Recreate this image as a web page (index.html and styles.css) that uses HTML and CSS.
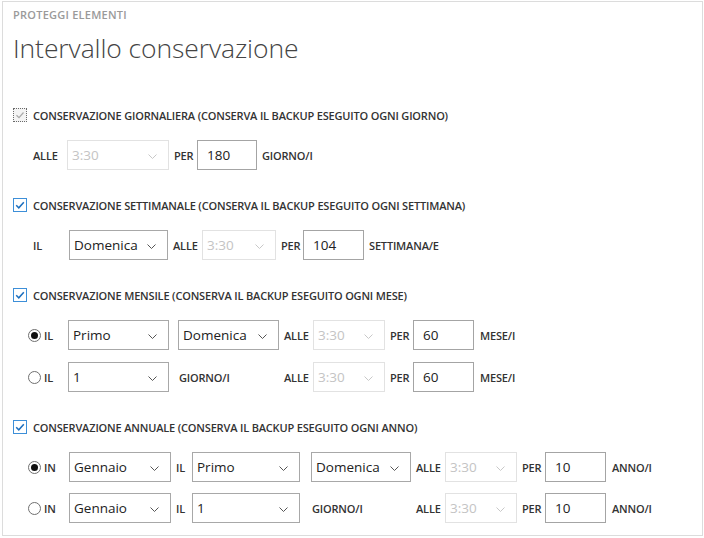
FILE: index.html
```html
<!DOCTYPE html>
<html lang="it">
<head>
<meta charset="utf-8">
<title>Intervallo conservazione</title>
<link rel="stylesheet" href="styles.css">
</head>
<body>
<div class="panel">
  <div class="eyebrow">PROTEGGI ELEMENTI</div>
  <h1 class="title">Intervallo conservazione</h1>

  <section class="sec">
    <div class="head"><span class="cb cb-off"><svg viewBox="0 0 14 14" width="14" height="14"><polyline points="3.5,7.2 6,9.6 10.5,4.5" fill="none" stroke="#a8a8a8" stroke-width="1.2"/></svg></span>CONSERVAZIONE GIORNALIERA (CONSERVA IL BACKUP ESEGUITO OGNI GIORNO)</div>
    <div class="row ind-33">
      <span class="lbl lead">ALLE</span>
      <span class="sel dis w102">3:30<svg class="chev" viewBox="0 0 9 5" width="9" height="5"><polyline points="0.5,0.5 4.5,4.5 8.5,0.5" fill="none" stroke="currentColor" stroke-width="1"/></svg></span>
      <span class="lbl per">PER</span>
      <span class="inp w60">180</span>
      <span class="lbl">GIORNO/I</span>
    </div>
  </section>

  <section class="sec">
    <div class="head"><span class="cb cb-on"><svg viewBox="0 0 14 14" width="14" height="14"><polyline points="3.2,7.2 5.8,9.8 10.8,4.2" fill="none" stroke="#1c6fbf" stroke-width="1.5"/></svg></span>CONSERVAZIONE SETTIMANALE (CONSERVA IL BACKUP ESEGUITO OGNI SETTIMANA)</div>
    <div class="row ind-33">
      <span class="lbl lead-il">IL</span>
      <span class="sel w99">Domenica<svg class="chev" viewBox="0 0 9 5" width="9" height="5"><polyline points="0.5,0.5 4.5,4.5 8.5,0.5" fill="none" stroke="currentColor" stroke-width="1"/></svg></span>
      <span class="lbl alle">ALLE</span>
      <span class="sel dis w74">3:30<svg class="chev" viewBox="0 0 9 5" width="9" height="5"><polyline points="0.5,0.5 4.5,4.5 8.5,0.5" fill="none" stroke="currentColor" stroke-width="1"/></svg></span>
      <span class="lbl per-s">PER</span>
      <span class="inp w61">104</span>
      <span class="lbl">SETTIMANA/E</span>
    </div>
  </section>

  <section class="sec">
    <div class="head"><span class="cb cb-on"><svg viewBox="0 0 14 14" width="14" height="14"><polyline points="3.2,7.2 5.8,9.8 10.8,4.2" fill="none" stroke="#1c6fbf" stroke-width="1.5"/></svg></span>CONSERVAZIONE MENSILE (CONSERVA IL BACKUP ESEGUITO OGNI MESE)</div>
    <div class="rows">
      <div class="row ind-28">
        <span class="radio on"></span>
        <span class="lbl rlbl">IL</span>
        <span class="sel w101">Primo<svg class="chev" viewBox="0 0 9 5" width="9" height="5"><polyline points="0.5,0.5 4.5,4.5 8.5,0.5" fill="none" stroke="currentColor" stroke-width="1"/></svg></span>
        <span class="sel w101 push4">Domenica<svg class="chev" viewBox="0 0 9 5" width="9" height="5"><polyline points="0.5,0.5 4.5,4.5 8.5,0.5" fill="none" stroke="currentColor" stroke-width="1"/></svg></span>
        <span class="lbl alle">ALLE</span>
        <span class="sel dis w72">3:30<svg class="chev" viewBox="0 0 9 5" width="9" height="5"><polyline points="0.5,0.5 4.5,4.5 8.5,0.5" fill="none" stroke="currentColor" stroke-width="1"/></svg></span>
        <span class="lbl per">PER</span>
        <span class="inp w61">60</span>
        <span class="lbl unit">MESE/I</span>
      </div>
      <div class="row ind-28">
        <span class="radio"></span>
        <span class="lbl rlbl">IL</span>
        <span class="sel w101">1<svg class="chev" viewBox="0 0 9 5" width="9" height="5"><polyline points="0.5,0.5 4.5,4.5 8.5,0.5" fill="none" stroke="currentColor" stroke-width="1"/></svg></span>
        <span class="lbl slot w101 push4">GIORNO/I</span>
        <span class="lbl alle">ALLE</span>
        <span class="sel dis w72">3:30<svg class="chev" viewBox="0 0 9 5" width="9" height="5"><polyline points="0.5,0.5 4.5,4.5 8.5,0.5" fill="none" stroke="currentColor" stroke-width="1"/></svg></span>
        <span class="lbl per">PER</span>
        <span class="inp w61">60</span>
        <span class="lbl unit">MESE/I</span>
      </div>
    </div>
  </section>

  <section class="sec">
    <div class="head"><span class="cb cb-on"><svg viewBox="0 0 14 14" width="14" height="14"><polyline points="3.2,7.2 5.8,9.8 10.8,4.2" fill="none" stroke="#1c6fbf" stroke-width="1.5"/></svg></span>CONSERVAZIONE ANNUALE (CONSERVA IL BACKUP ESEGUITO OGNI ANNO)</div>
    <div class="rows rows-tight">
      <div class="row ind-28">
        <span class="radio on"></span>
        <span class="lbl rlbl-in">IN</span>
        <span class="sel w102">Gennaio<svg class="chev" viewBox="0 0 9 5" width="9" height="5"><polyline points="0.5,0.5 4.5,4.5 8.5,0.5" fill="none" stroke="currentColor" stroke-width="1"/></svg></span>
        <span class="lbl il-mid">IL</span>
        <span class="sel w108">Primo<svg class="chev" viewBox="0 0 9 5" width="9" height="5"><polyline points="0.5,0.5 4.5,4.5 8.5,0.5" fill="none" stroke="currentColor" stroke-width="1"/></svg></span>
        <span class="sel w100 push6">Domenica<svg class="chev" viewBox="0 0 9 5" width="9" height="5"><polyline points="0.5,0.5 4.5,4.5 8.5,0.5" fill="none" stroke="currentColor" stroke-width="1"/></svg></span>
        <span class="lbl alle">ALLE</span>
        <span class="sel dis w72">3:30<svg class="chev" viewBox="0 0 9 5" width="9" height="5"><polyline points="0.5,0.5 4.5,4.5 8.5,0.5" fill="none" stroke="currentColor" stroke-width="1"/></svg></span>
        <span class="lbl per">PER</span>
        <span class="inp w61">10</span>
        <span class="lbl unit">ANNO/I</span>
      </div>
      <div class="row ind-28">
        <span class="radio"></span>
        <span class="lbl rlbl-in">IN</span>
        <span class="sel w102">Gennaio<svg class="chev" viewBox="0 0 9 5" width="9" height="5"><polyline points="0.5,0.5 4.5,4.5 8.5,0.5" fill="none" stroke="currentColor" stroke-width="1"/></svg></span>
        <span class="lbl il-mid">IL</span>
        <span class="sel w108">1<svg class="chev" viewBox="0 0 9 5" width="9" height="5"><polyline points="0.5,0.5 4.5,4.5 8.5,0.5" fill="none" stroke="currentColor" stroke-width="1"/></svg></span>
        <span class="lbl slot w100 push6">GIORNO/I</span>
        <span class="lbl alle">ALLE</span>
        <span class="sel dis w72">3:30<svg class="chev" viewBox="0 0 9 5" width="9" height="5"><polyline points="0.5,0.5 4.5,4.5 8.5,0.5" fill="none" stroke="currentColor" stroke-width="1"/></svg></span>
        <span class="lbl per">PER</span>
        <span class="inp w61">10</span>
        <span class="lbl unit">ANNO/I</span>
      </div>
    </div>
  </section>
</div>
</body>
</html>
```

FILE: styles.css
```css
* { box-sizing: border-box; }
html, body { margin: 0; padding: 0; background: #fff; }
body {
  font-family: "Open Sans", "Noto Sans", "Liberation Sans", sans-serif;
  color: #333;
}
.panel {
  margin: 1px 0 0 2px;
  width: 701px;
  height: 535px;
  border: 1px solid #dcdcdc;
  padding: 5px 0 0 10px;
}
.eyebrow {
  font-size: 11px;
  font-weight: 600;
  color: #9a9a9a;
  line-height: 16px;
  letter-spacing: 0.25px;
}
.title {
  margin: 8px 0 0 0;
  font-size: 26.5px;
  font-weight: 300;
  line-height: 34px;
  color: #444;
  letter-spacing: -0.1px;
}
.sec { margin-top: 25px; }
.title + .sec { margin-top: 40px; }
.head {
  display: flex;
  align-items: center;
  height: 20px;
  font-size: 11px;
  font-weight: 600;
  color: #333;
  letter-spacing: -0.17px;
  margin-bottom: 15px;
}
.cb {
  width: 14px;
  height: 14px;
  margin-right: 6px;
  display: inline-flex;
  flex: none;
}
.cb svg { display: block; }
.cb-on { border: 1px solid #3d8fd8; }
.cb-on svg { margin: -1px; }
.cb-off { border: 1px dotted #6a6a6a; background: #f4f4f4; }
.cb-off svg { margin: -1px; }

.rows { display: flex; flex-direction: column; gap: 12px; }
.rows-tight { gap: 11px; }
.row {
  display: flex;
  align-items: center;
  height: 30px;
  gap: 5px;
}
.ind-33 { padding-left: 20px; }
.ind-28 { padding-left: 15px; }

.lbl {
  font-size: 11px;
  font-weight: 600;
  color: #333;
  letter-spacing: -0.17px;
  white-space: nowrap;
  flex: none;
}
.lead { width: 29px; }
.lead-il { width: 31px; }
.alle { width: 24px; }
.per { width: 18px; }
.per-s { width: 17px; }
.rlbl { width: 19px; margin-left: -2px; }
.rlbl-in { width: 20px; margin-left: -2px; }
.il-mid { width: 11px; }
.slot { padding-left: 1px; }
.unit { margin-left: 1px; }
.push4 { margin-left: 4px; }
.push6 { margin-left: 6px; }

.radio {
  width: 13px;
  height: 13px;
  border: 1px solid #6f6f6f;
  border-radius: 50%;
  flex: none;
  display: flex;
  align-items: center;
  justify-content: center;
}
.radio.on::after {
  content: "";
  width: 7px;
  height: 7px;
  border-radius: 50%;
  background: #111;
}

.sel, .inp {
  height: 30px;
  display: flex;
  align-items: center;
  font-size: 13.5px;
  color: #222;
  background: #fff;
  flex: none;
  position: relative;
  white-space: nowrap;
}
.sel {
  border: 1px solid #a8a8a8;
  padding-left: 4px;
}
.sel .chev {
  position: absolute;
  right: 11px;
  top: 13px;
  color: #555;
}
.sel.dis { border-color: #e2e2e2; color: #c4c4c4; }
.sel.dis .chev { color: #c8c8c8; }
.inp {
  border: 1px solid #a4a4a4;
  padding-left: 9px;
}
.w60 { width: 60px; }
.w61 { width: 61px; }
.w72 { width: 72px; }
.w74 { width: 74px; }
.w99 { width: 99px; }
.w100 { width: 100px; }
.w101 { width: 101px; }
.w102 { width: 102px; }
.w108 { width: 108px; }
```
